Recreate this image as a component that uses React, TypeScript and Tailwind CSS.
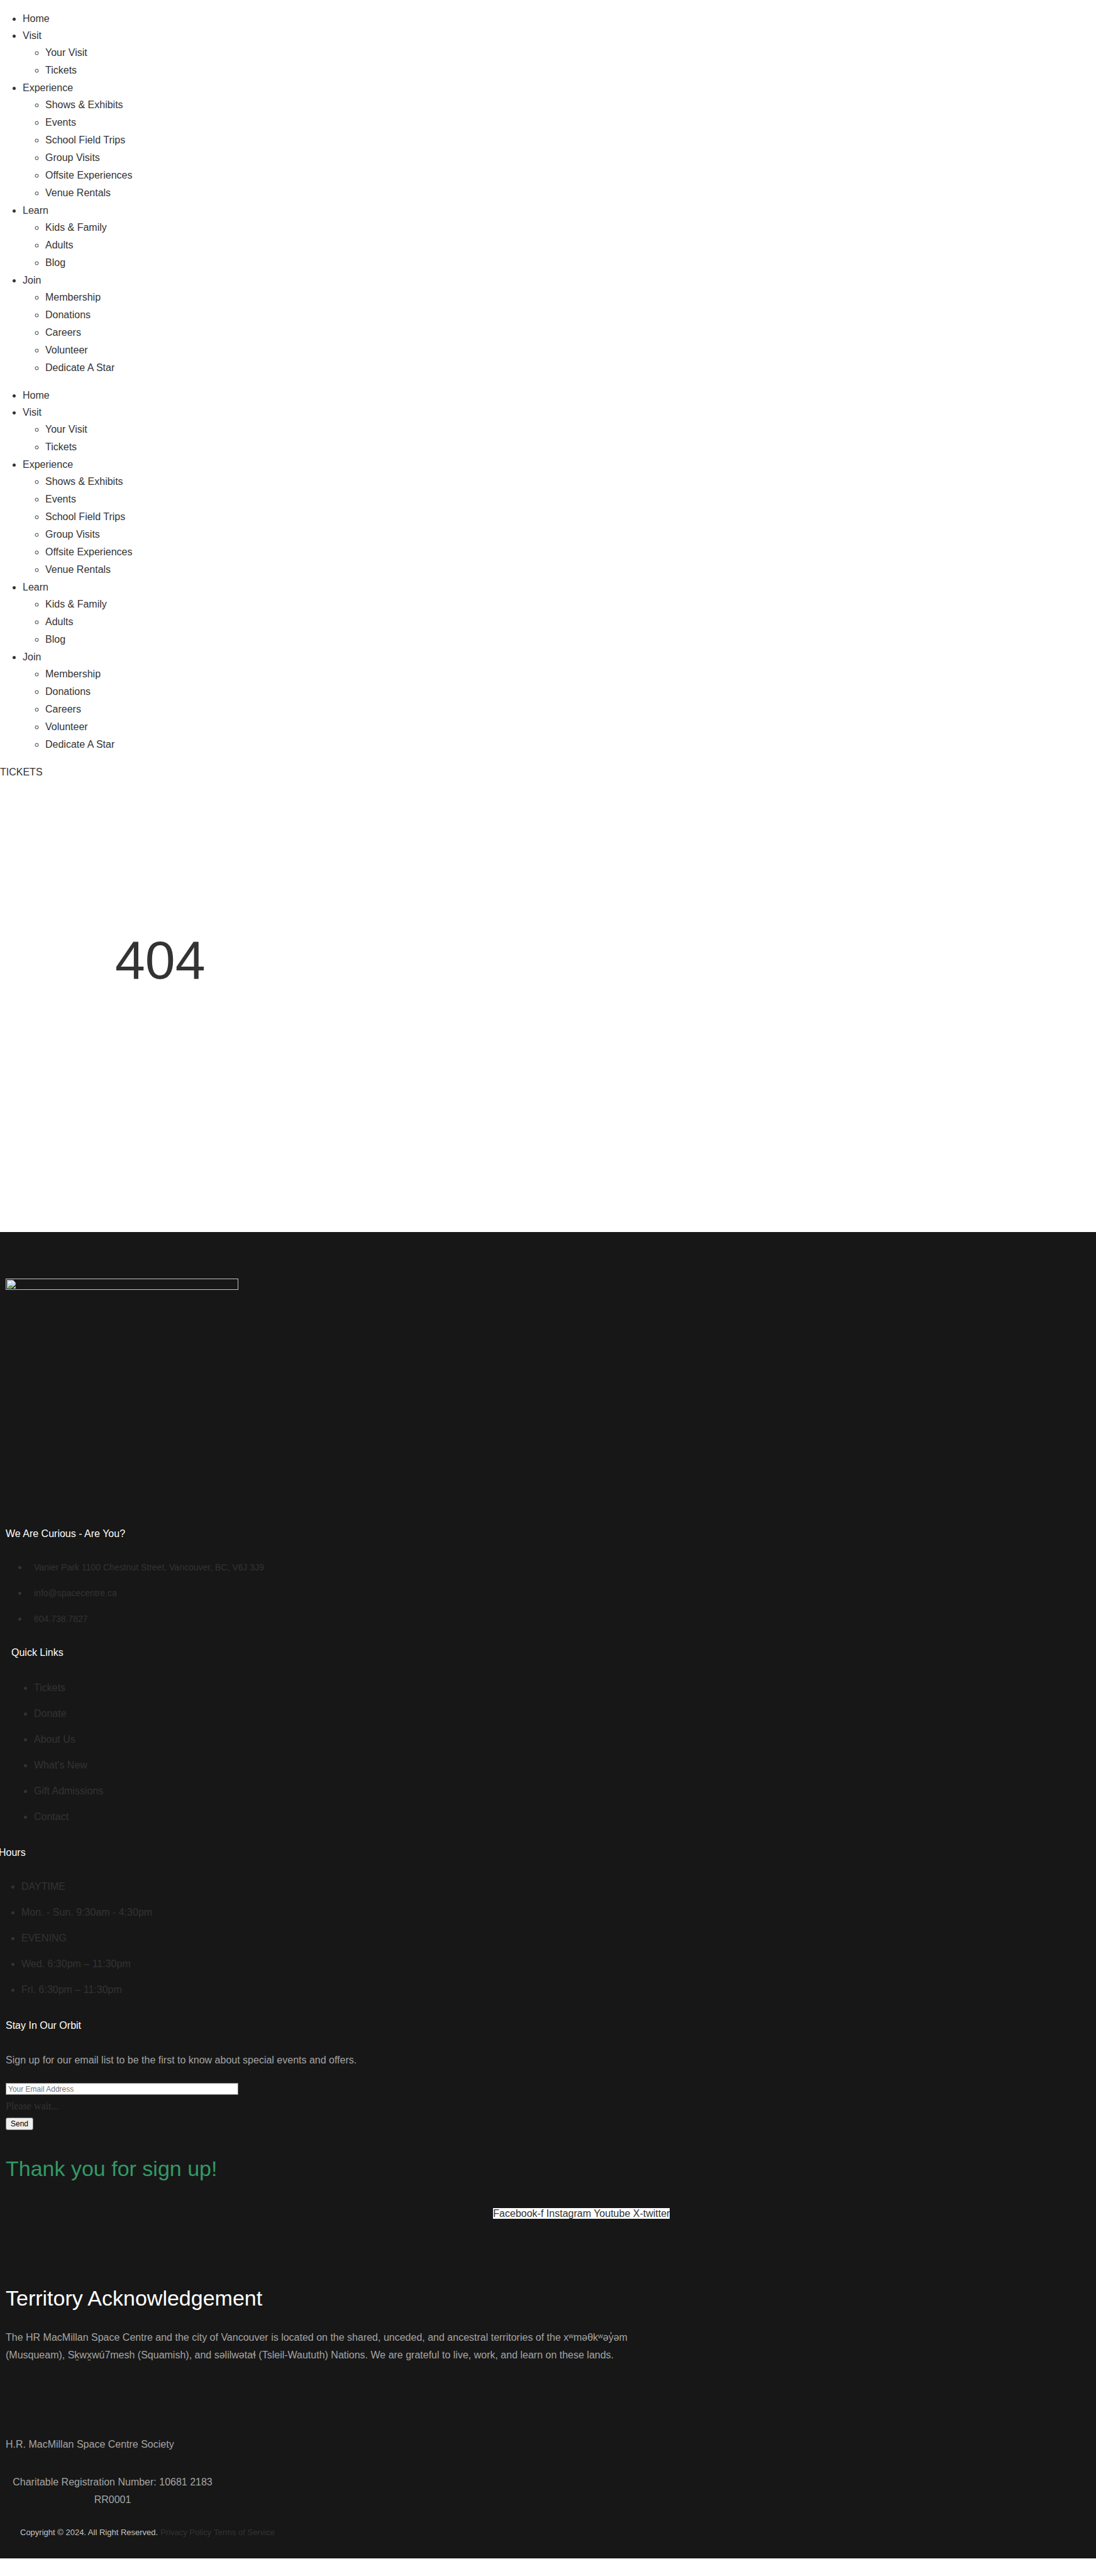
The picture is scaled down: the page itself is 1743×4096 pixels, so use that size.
const menu: { label: string; children?: string[] }[] = [
  { label: 'Home' },
  { label: 'Visit', children: ['Your Visit', 'Tickets'] },
  {
    label: 'Experience',
    children: ['Shows & Exhibits', 'Events', 'School Field Trips', 'Group Visits', 'Offsite Experiences', 'Venue Rentals'],
  },
  { label: 'Learn', children: ['Kids & Family', 'Adults', 'Blog'] },
  { label: 'Join', children: ['Membership', 'Donations', 'Careers', 'Volunteer', 'Dedicate A Star'] },
]

const contact = ['Vanier Park 1100 Chestnut Street, Vancouver, BC, V6J 3J9', 'info@spacecentre.ca', '604.738.7827']
const quickLinks = ['Tickets', 'Donate', 'About Us', "What's New", 'Gift Admissions', 'Contact']
const hours = ['DAYTIME', 'Mon. - Sun. 9:30am - 4:30pm', 'EVENING', 'Wed. 6:30pm – 11:30pm', 'Fri. 6:30pm – 11:30pm']
const social = ['Facebook-f', 'Instagram', 'Youtube', 'X-twitter']

function Menu({ label }: { label: string }) {
  return (
    <nav aria-label={label} className="pt-4">
      <ul className="list-disc pl-9 leading-[27px]">
        {menu.map((item) => (
          <li key={item.label}>
            <a href="#">{item.label}</a>
            {item.children && (
              <ul className="list-[circle] pl-9 leading-7">
                {item.children.map((child) => (
                  <li key={child}>
                    <a href="#">{child}</a>
                  </li>
                ))}
              </ul>
            )}
          </li>
        ))}
      </ul>
    </nav>
  )
}

function BrokenImage() {
  return (
    <div role="img" aria-label="Logo" className="h-[18px] w-[370px] border border-[#c0c0c0] p-px">
      <svg viewBox="0 0 16 16" className="block size-[14px]">
        <path d="M0 0h11l5 5v4l-8 7H0z" fill="#a3a3a3" />
        <path d="M1 1h9v4h5v3.5L7.500 15H1z" fill="#c3d5f5" />
        <path d="M10 1l5 4h-5z" fill="#ffffff" />
        <path d="M2 5.500a1.500 1.500 0 0 1 1.500-1.500a1.800 1.800 0 0 1 3.400 0A1.500 1.500 0 0 1 8 6H2z" fill="#ffffff" />
        <path d="M1 15c2-3.500 4-5 6.500-5c1.600 0 2.500.500 3.500 1.500L7.500 15z" fill="#5cad35" />
        <path d="M16 11v5h-5.500z" fill="#a3a3a3" />
        <path d="M15 12.500V15h-2.500z" fill="#c3d5f5" />
      </svg>
    </div>
  )
}

export default function App() {
  return (
    <div className="bg-white pb-7 font-['Liberation_Sans',Arial,sans-serif] text-base leading-7 text-[#333333]">
      <header>
        <Menu label="Main" />
        <Menu label="Mobile" />
        <a href="#" className="mt-4 block">
          TICKETS
        </a>
      </header>

      <main className="px-[183px] pt-[240px] pb-[389px]">
        <h1 className="text-[86px] leading-[88px]">404</h1>
      </main>

      <footer className="bg-[#171717] pt-[74px] pb-[27px]">
        <div className="px-[9px]">
          <BrokenImage />
        </div>

        <section className="mt-[374px] px-[9px]">
          <h2 className="font-medium text-white">We Are Curious - Are You?</h2>
          <ul className="mt-[25px] list-disc space-y-[13px] pl-9">
            {contact.map((item) => (
              <li key={item} className="h-7 pl-[9px]">
                <a href="#" className="text-sm leading-7">
                  {item}
                </a>
              </li>
            ))}
          </ul>
        </section>

        <section className="mt-[26px] px-[18px]">
          <h2 className="font-medium text-white">Quick Links</h2>
          <ul className="mt-7 list-disc space-y-[13px] pl-9">
            {quickLinks.map((item) => (
              <li key={item}>
                <a href="#">{item}</a>
              </li>
            ))}
          </ul>
        </section>

        <section className="-ml-0.5 mt-[29px]">
          <h2 className="font-medium text-white">Hours</h2>
          <ul className="mt-[26px] list-disc space-y-[13px] pl-9">
            {hours.map((item) => (
              <li key={item}>{item}</li>
            ))}
          </ul>
        </section>

        <section className="mt-[29px] px-[9px]">
          <h2 className="font-medium text-white">Stay In Our Orbit</h2>
          <p className="mt-[27px] text-[#a5a5a5]">
            Sign up for our email list to be the first to know about special events and offers.
          </p>
          <form className="mt-[22px]" onSubmit={(e) => e.preventDefault()}>
            <input
              type="email"
              aria-label="Your Email Address"
              placeholder="Your Email Address"
              className="block h-[19px] w-[370px] border border-[#767676] bg-white px-[3px] text-xs leading-4 text-black placeholder:text-[#757575]"
            />
            <p className="mt-1 font-['Liberation_Serif','Times_New_Roman',serif]">Please wait...</p>
            <button
              type="submit"
              className="mt-1 block h-5 rounded-[3px] border border-[#767676] bg-[#efefef] px-[7px] text-xs leading-4 text-black"
            >
              Send
            </button>
          </form>
          <p className="mt-9 text-[34px] leading-[50px] text-[#339966]">Thank you for sign up!</p>
        </section>

        <div className="mt-[33px] pl-[45%]">
          <span className="bg-white">
            {social.map((item, i) => (
              <span key={item}>
                {i > 0 && ' '}
                <a href="#">{item}</a>
              </span>
            ))}
          </span>
        </div>

        <section className="mt-[95px] max-w-[1040px] px-[9px]">
          <h2 className="text-[34px] leading-[50px] font-medium text-white">Territory Acknowledgement</h2>
          <p className="mt-6 text-[#a5a5a5]">
            The HR MacMillan Space Centre and the city of Vancouver is located on the shared, unceded, and ancestral
            territories of the xʷməθkʷəy̓əm (Musqueam), Sḵwx̱wú7mesh (Squamish), and səlilwətaɬ (Tsleil-Waututh)
            Nations. We are grateful to live, work, and learn on these lands.
          </p>
        </section>

        <div className="mt-[114px] text-[#a5a5a5]">
          <p className="px-[9px]">H.R. MacMillan Space Centre Society</p>
          <p className="mt-8 w-[358px] px-[9px] text-center">Charitable Registration Number: 10681 2183 RR0001</p>
        </div>

        <p className="mt-6 flex gap-1 pl-8 text-[13px] leading-7">
          <span className="text-[#c4c4c4]">Copyright © 2024. All Right Reserved.</span>
          <a href="#">Privacy Policy</a>
          <a href="#">Terms of Service</a>
        </p>
      </footer>
    </div>
  )
}
